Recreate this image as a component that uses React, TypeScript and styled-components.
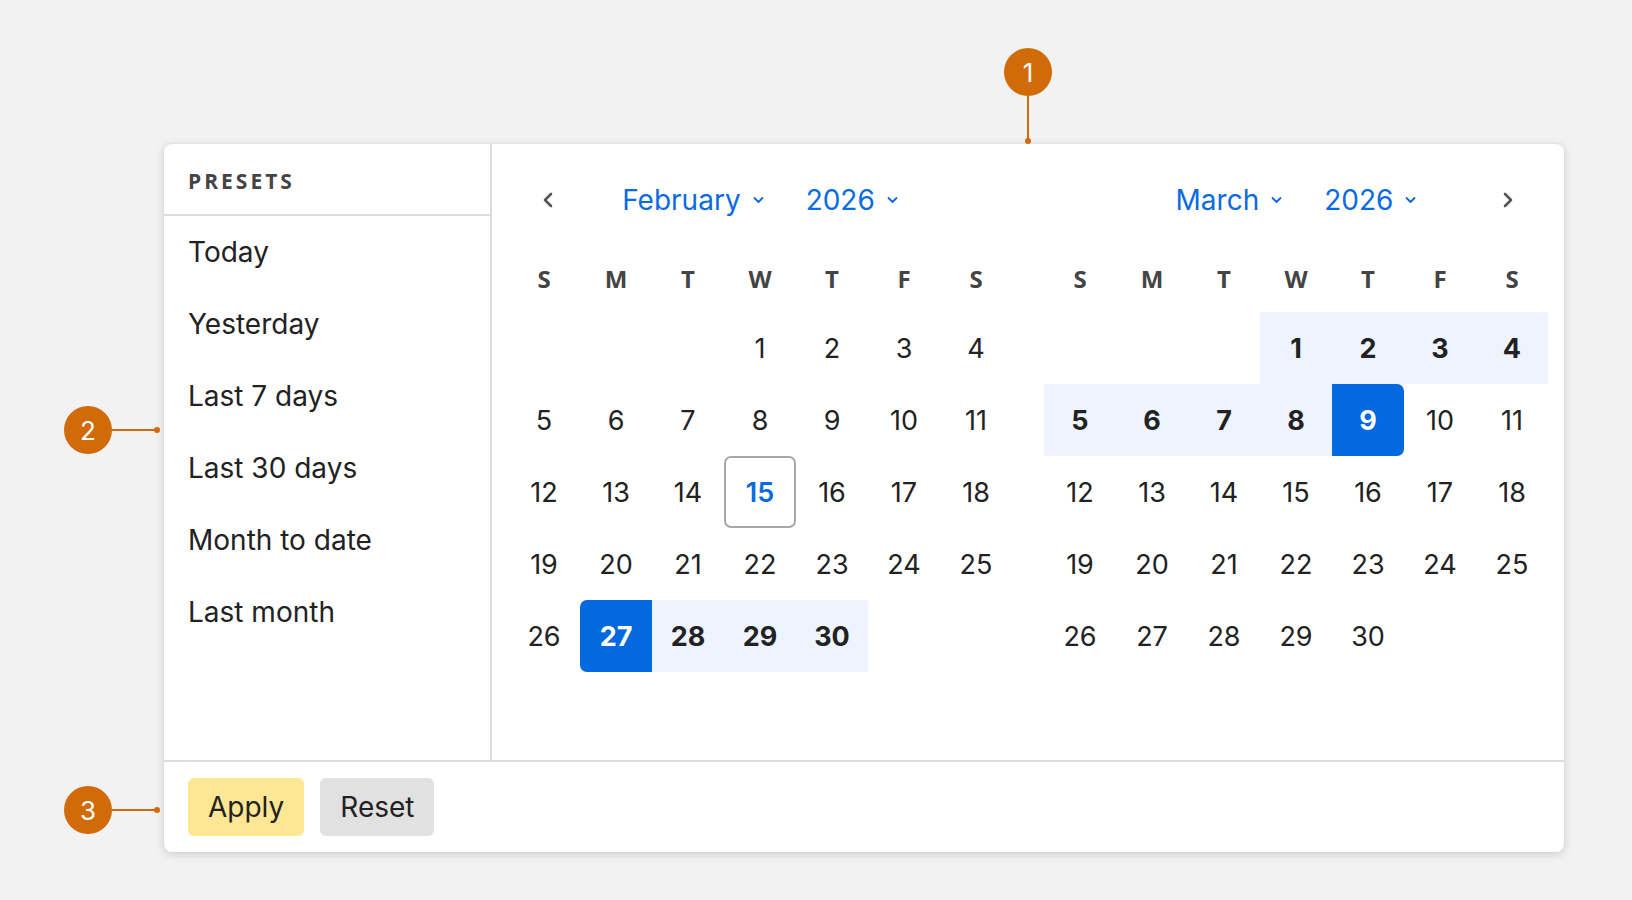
import React from "react";
import styled, { createGlobalStyle, css } from "styled-components";

const GlobalStyle = createGlobalStyle`
  html, body { margin: 0; padding: 0; background: #f2f2f2; }
  body { font-family: Inter, "Noto Sans", sans-serif; color: #222; }
  * { box-sizing: border-box; }
`;

const BLUE = "#0a6be0";
const LINE = "#dcdcdc";
const ORANGE = "#d16a08";

const Page = styled.div`
  position: relative;
  width: 1632px;
  height: 900px;
  padding: 144px 0 0 164px;
`;

const Card = styled.div`
  width: 1400px;
  background: #fff;
  border-radius: 8px;
  box-shadow: 0 2px 10px rgba(0, 0, 0, 0.16), 0 0 2px rgba(0, 0, 0, 0.06);
  display: flex;
  flex-direction: column;
`;

const Body = styled.div`
  display: flex;
  height: 616px;
`;

const Sidebar = styled.div`
  width: 328px;
  border-right: 2px solid ${LINE};
  display: flex;
  flex-direction: column;
`;

const SidebarHeader = styled.div`
  height: 72px;
  border-bottom: 2px solid ${LINE};
  padding: 4px 24px 0;
  display: flex;
  align-items: center;
  font-family: "Open Sans", Lato, sans-serif;
  font-weight: 700;
  font-size: 21px;
  letter-spacing: 3px;
  color: #444;
`;

const PresetItem = styled.div`
  height: 72px;
  padding: 0 24px;
  display: flex;
  align-items: center;
  font-size: 28px;
  color: #222;
`;

const Calendars = styled.div`
  display: flex;
  gap: 32px;
  padding: 16px;
`;

const Month = styled.div`
  width: 504px;
  display: flex;
  flex-direction: column;
`;

const MonthHeader = styled.div`
  height: 80px;
  padding: 0 16px;
  display: flex;
  align-items: center;
`;

const NavButton = styled.button<{ $hidden?: boolean }>`
  width: 48px;
  height: 48px;
  border: none;
  background: transparent;
  padding: 0;
  display: flex;
  align-items: center;
  justify-content: center;
  color: #555;
  visibility: ${(p) => (p.$hidden ? "hidden" : "visible")};
`;

const Titles = styled.div`
  flex: 1;
  display: flex;
  justify-content: center;
  align-items: center;
  gap: 42px;
`;

const Select = styled.div`
  display: inline-flex;
  align-items: center;
  gap: 12px;
  color: ${BLUE};
  font-size: 28px;
`;

const WeekdayRow = styled.div`
  margin-top: 8px;
  height: 64px;
  padding-bottom: 4px;
  display: grid;
  grid-template-columns: repeat(7, 72px);
  align-items: center;
  justify-items: center;
  font-family: "Open Sans", Lato, sans-serif;
  font-weight: 700;
  font-size: 24px;
  color: #444;
`;

const DaysGrid = styled.div`
  display: grid;
  grid-template-columns: repeat(7, 72px);
  grid-template-rows: repeat(6, 72px);
`;

type Kind = "none" | "today" | "start" | "end" | "range" | "empty";

const DayCell = styled.div<{ $kind: Kind }>`
  display: flex;
  align-items: center;
  justify-content: center;
  font-size: 27px;
  color: #222;
  ${(p) =>
    p.$kind === "today" &&
    css`
      border: 2px solid #a8a8a8;
      border-radius: 7px;
      color: ${BLUE};
      font-weight: 600;
    `}
  ${(p) =>
    p.$kind === "range" &&
    css`
      background: #eef4fe;
      font-weight: 700;
    `}
  ${(p) =>
    (p.$kind === "start" || p.$kind === "end") &&
    css`
      background: #0468de;
      color: #fff;
      font-weight: 700;
    `}
  ${(p) =>
    p.$kind === "start" &&
    css`
      border-radius: 7px 0 0 7px;
    `}
  ${(p) =>
    p.$kind === "end" &&
    css`
      border-radius: 0 7px 7px 0;
    `}
`;

const Footer = styled.div`
  border-top: 2px solid ${LINE};
  padding: 16px 24px;
  display: flex;
  gap: 16px;
`;

const ActionButton = styled.button<{ $bg: string }>`
  height: 58px;
  padding: 0 20px;
  border: none;
  border-radius: 6px;
  background: ${(p) => p.$bg};
  font-family: Inter, "Noto Sans", sans-serif;
  font-size: 28px;
  color: #222;
`;

const Callout = styled.div<{ $x: number; $y: number }>`
  position: absolute;
  left: ${(p) => p.$x - 24}px;
  top: ${(p) => p.$y - 24}px;
  width: 48px;
  height: 48px;
  border-radius: 50%;
  background: ${ORANGE};
  color: #fff;
  font-size: 26px;
  display: flex;
  align-items: center;
  justify-content: center;
`;

const LeaderH = styled.div<{ $x: number; $y: number; $len: number }>`
  position: absolute;
  left: ${(p) => p.$x}px;
  top: ${(p) => p.$y - 1}px;
  width: ${(p) => p.$len}px;
  height: 2px;
  background: ${ORANGE};
  &::after {
    content: "";
    position: absolute;
    right: -3px;
    top: -2px;
    width: 6px;
    height: 6px;
    border-radius: 50%;
    background: ${ORANGE};
  }
`;

const LeaderV = styled.div<{ $x: number; $y: number; $len: number }>`
  position: absolute;
  left: ${(p) => p.$x - 1}px;
  top: ${(p) => p.$y}px;
  width: 2px;
  height: ${(p) => p.$len}px;
  background: ${ORANGE};
  &::after {
    content: "";
    position: absolute;
    bottom: -3px;
    left: -2px;
    width: 6px;
    height: 6px;
    border-radius: 50%;
    background: ${ORANGE};
  }
`;

const ChevronLeft = () => (
  <svg width="14" height="18" viewBox="0 0 14 18" fill="none">
    <polyline points="10,3 4,9 10,15" stroke="#555" strokeWidth="2.6" strokeLinecap="round" strokeLinejoin="round" />
  </svg>
);

const ChevronRight = () => (
  <svg width="14" height="18" viewBox="0 0 14 18" fill="none">
    <polyline points="4,3 10,9 4,15" stroke="#555" strokeWidth="2.6" strokeLinecap="round" strokeLinejoin="round" />
  </svg>
);

const ChevronDown = () => (
  <svg width="11" height="8" viewBox="0 0 11 8" fill="none">
    <polyline points="1.5,2 5.5,6 9.5,2" stroke={BLUE} strokeWidth="1.8" strokeLinecap="round" strokeLinejoin="round" />
  </svg>
);

const WEEKDAYS = ["S", "M", "T", "W", "T", "F", "S"];
const PRESETS = ["Today", "Yesterday", "Last 7 days", "Last 30 days", "Month to date", "Last month"];

type MonthSpec = {
  name: string;
  year: string;
  offset: number;
  days: number;
  kindOf: (d: number) => Kind;
  prev?: boolean;
  next?: boolean;
};

const months: MonthSpec[] = [
  {
    name: "February",
    year: "2026",
    offset: 3,
    days: 30,
    prev: true,
    kindOf: (d) => (d === 15 ? "today" : d === 27 ? "start" : d > 27 ? "range" : "none"),
  },
  {
    name: "March",
    year: "2026",
    offset: 3,
    days: 30,
    next: true,
    kindOf: (d) => (d < 9 ? "range" : d === 9 ? "end" : "none"),
  },
];

const MonthView = ({ m }: { m: MonthSpec }) => {
  const cells: { d: number | null; kind: Kind }[] = [];
  for (let i = 0; i < m.offset; i++) cells.push({ d: null, kind: "empty" });
  for (let d = 1; d <= m.days; d++) cells.push({ d, kind: m.kindOf(d) });
  return (
    <Month>
      <MonthHeader>
        <NavButton $hidden={!m.prev} aria-label="Previous month">
          <ChevronLeft />
        </NavButton>
        <Titles>
          <Select>
            {m.name}
            <ChevronDown />
          </Select>
          <Select>
            {m.year}
            <ChevronDown />
          </Select>
        </Titles>
        <NavButton $hidden={!m.next} aria-label="Next month">
          <ChevronRight />
        </NavButton>
      </MonthHeader>
      <WeekdayRow>
        {WEEKDAYS.map((w, i) => (
          <span key={i}>{w}</span>
        ))}
      </WeekdayRow>
      <DaysGrid>
        {cells.map((c, i) => (
          <DayCell key={i} $kind={c.kind}>
            {c.d ?? ""}
          </DayCell>
        ))}
      </DaysGrid>
    </Month>
  );
};

export default function App() {
  return (
    <>
      <GlobalStyle />
      <Page>
        <Card>
          <Body>
            <Sidebar>
              <SidebarHeader>PRESETS</SidebarHeader>
              {PRESETS.map((p) => (
                <PresetItem key={p}>{p}</PresetItem>
              ))}
            </Sidebar>
            <Calendars>
              {months.map((m) => (
                <MonthView key={m.name} m={m} />
              ))}
            </Calendars>
          </Body>
          <Footer>
            <ActionButton $bg="#fde694">Apply</ActionButton>
            <ActionButton $bg="#e1e1e1">Reset</ActionButton>
          </Footer>
        </Card>
        <Callout $x={1028} $y={72}>1</Callout>
        <LeaderV $x={1028} $y={96} $len={45} />
        <Callout $x={88} $y={430}>2</Callout>
        <LeaderH $x={112} $y={430} $len={45} />
        <Callout $x={88} $y={810}>3</Callout>
        <LeaderH $x={112} $y={810} $len={45} />
      </Page>
    </>
  );
}
